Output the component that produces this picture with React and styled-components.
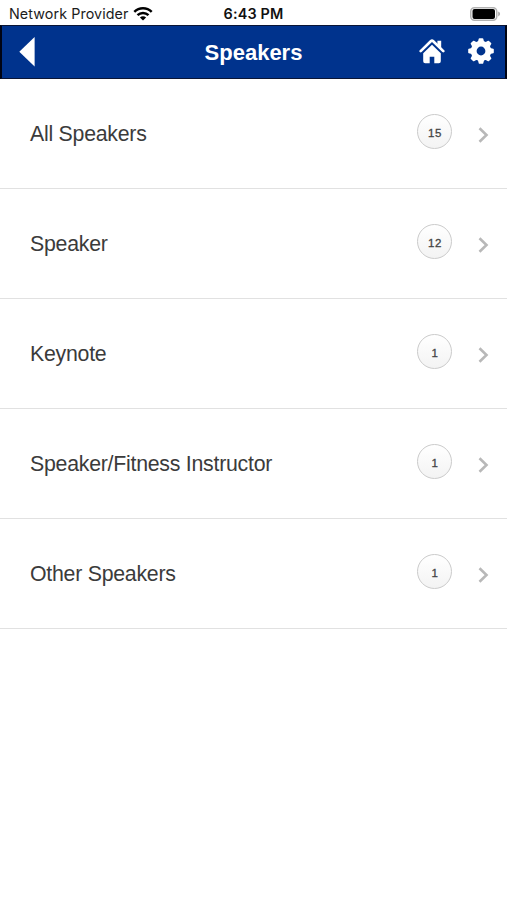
import React from "react";
import styled, { createGlobalStyle } from "styled-components";

const GlobalStyle = createGlobalStyle`
  * { box-sizing: border-box; }
  body { margin: 0; background: #fff; }
`;

const Screen = styled.main`
  width: 100%;
  min-height: 900px;
  background: #fff;
  color: #3b3b3b;
  font-family: "Liberation Sans", Arial, sans-serif;
`;

const StatusBar = styled.div`
  display: grid;
  grid-template-columns: 1fr auto 1fr;
  align-items: center;
  height: 25px;
  padding: 1px 6px 0 9px;
  font-family: Inter, sans-serif;
  color: #1c1c1c;
`;

const Carrier = styled.div`
  display: flex;
  align-items: center;
  gap: 5px;
  padding-top: 1px;
  font-size: 14.3px;
  letter-spacing: 0.09px;
  line-height: 24px;
  white-space: nowrap;
`;

const Clock = styled.div`
  margin: 1px 3px 0 0;
  font-size: 14.4px;
  font-weight: 600;
  letter-spacing: 0.15px;
  line-height: 24px;
  color: #111;
`;

const BatterySlot = styled.div`
  display: flex;
  justify-content: flex-end;
`;

const Header = styled.header`
  display: grid;
  grid-template-columns: 1fr auto 1fr;
  align-items: center;
  height: 54px;
  padding: 0 11px 0 17px;
  background: #00338d;
  border: solid #0a1535;
  border-width: 1px 2px 1px 2px;
  border-left-color: #000414;
  border-right-color: #000414;
`;

const Title = styled.h1`
  margin: 0 6px 0 0;
  padding-top: 1px;
  color: #fff;
  font-size: 22px;
  font-weight: 700;
  line-height: 28px;
`;

const IconButton = styled.button`
  display: flex;
  padding: 0;
  border: 0;
  background: none;
  color: #fff;
`;

const Actions = styled.div`
  display: flex;
  justify-content: flex-end;
  gap: 23px;
  padding-bottom: 2px;
`;

const List = styled.ul`
  margin: 0;
  padding: 0;
  list-style: none;
`;

const Row = styled.li`
  display: flex;
  align-items: center;
  height: 110px;
  padding: 0 18px 0 30px;
  border-bottom: 1px solid #e1e1e1;
`;

const Label = styled.span`
  flex: 1;
  font-size: 21.3px;
  letter-spacing: -0.25px;
  line-height: 28px;
`;

const Count = styled.span`
  display: flex;
  align-items: center;
  justify-content: center;
  width: 35px;
  height: 35px;
  margin: 0 26px 4px 0;
  padding: 3px 0 0 1px;
  border: 1.5px solid #cbcbcb;
  border-radius: 50%;
  background: linear-gradient(#fff, #f3f3f3);
  color: #444;
  font-size: 11.5px;
  letter-spacing: 0.6px;
  -webkit-text-stroke: 0.3px #444;
`;

const Chevron = styled.svg`
  display: block;
  margin-top: 2px;
`;

const categories = [
  ["All Speakers", 15],
  ["Speaker", 12],
  ["Keynote", 1],
  ["Speaker/Fitness Instructor", 1],
  ["Other Speakers", 1],
];

const Wifi = () => (
  <svg width="20" height="14" viewBox="0 0 20 14" fill="none" stroke="#000" strokeWidth="2.5">
    <path d="M1.3 4.8C6.2.1 13.8.1 18.7 4.8" />
    <path d="M4.5 8.1c3.1-2.9 7.9-2.9 11 0" />
    <path d="M10 13.6 6.9 10.5c1.7-1.6 4.5-1.6 6.2 0Z" fill="#000" stroke="none" />
  </svg>
);

const Battery = () => (
  <svg width="31" height="14" viewBox="0 0 31 14">
    <rect x=".75" y=".75" width="26" height="12.5" rx="3.7" fill="#fff" stroke="#b2b2b2" strokeWidth="1.5" />
    <rect x="2.5" y="2" width="22.5" height="10" rx="2" fill="#000" />
    <path d="M28.2 4.6c2.5 1 2.5 3.8 0 4.8Z" fill="#a9a9a9" />
  </svg>
);

const Home = () => (
  <svg width="26" height="26" viewBox="0 0 26 26">
    <path d="M1.7 13.1 11.8 3.2q1.2-1.1 2.4 0l10.1 9.9" fill="none" stroke="currentColor" strokeWidth="2.7" strokeLinecap="round" strokeLinejoin="round" />
    <path d="M18.4 2.7h3.8v7.2l-3.8-3.7Z" fill="currentColor" />
    <path d="m13 6.8 8.8 8.5v7.9a2 2 0 0 1-2 2h-4.5v-6.4h-4.6v6.4H6.2a2 2 0 0 1-2-2v-7.9Z" fill="currentColor" />
  </svg>
);

const Gear = () => (
  <svg width="26" height="26" viewBox="0 0 26 26" fill="none" stroke="currentColor">
    <circle cx="13" cy="13" r="7.3" strokeWidth="5.8" />
    {[0, 45, 90, 135, 180, 225, 270, 315].map((angle) => (
      <path key={angle} d="M10.7 4 11.5 1h3l.8 3Z" transform={`rotate(${angle} 13 13)`} fill="currentColor" strokeWidth="1.6" strokeLinejoin="round" />
    ))}
  </svg>
);

export default function App() {
  return (
    <Screen>
      <GlobalStyle />
      <StatusBar>
        <Carrier>Network Provider <Wifi /></Carrier>
        <Clock>6:43 PM</Clock>
        <BatterySlot><Battery /></BatterySlot>
      </StatusBar>
      <Header>
        <IconButton aria-label="Back">
          <svg width="16" height="30" viewBox="0 0 16 30"><path d="M.3 14.7 15.6 0v29.4Z" fill="currentColor" /></svg>
        </IconButton>
        <Title>Speakers</Title>
        <Actions>
          <IconButton aria-label="Home"><Home /></IconButton>
          <IconButton aria-label="Settings"><Gear /></IconButton>
        </Actions>
      </Header>
      <List>
        {categories.map(([label, count]) => (
          <Row key={label}>
            <Label>{label}</Label>
            <Count>{count}</Count>
            <Chevron width="11" height="16" viewBox="0 0 11 16" fill="none" stroke="#b8b8b8" strokeWidth="2.6">
              <path d="m1.5 1.2 7 6.8-7 6.8" />
            </Chevron>
          </Row>
        ))}
      </List>
    </Screen>
  );
}
